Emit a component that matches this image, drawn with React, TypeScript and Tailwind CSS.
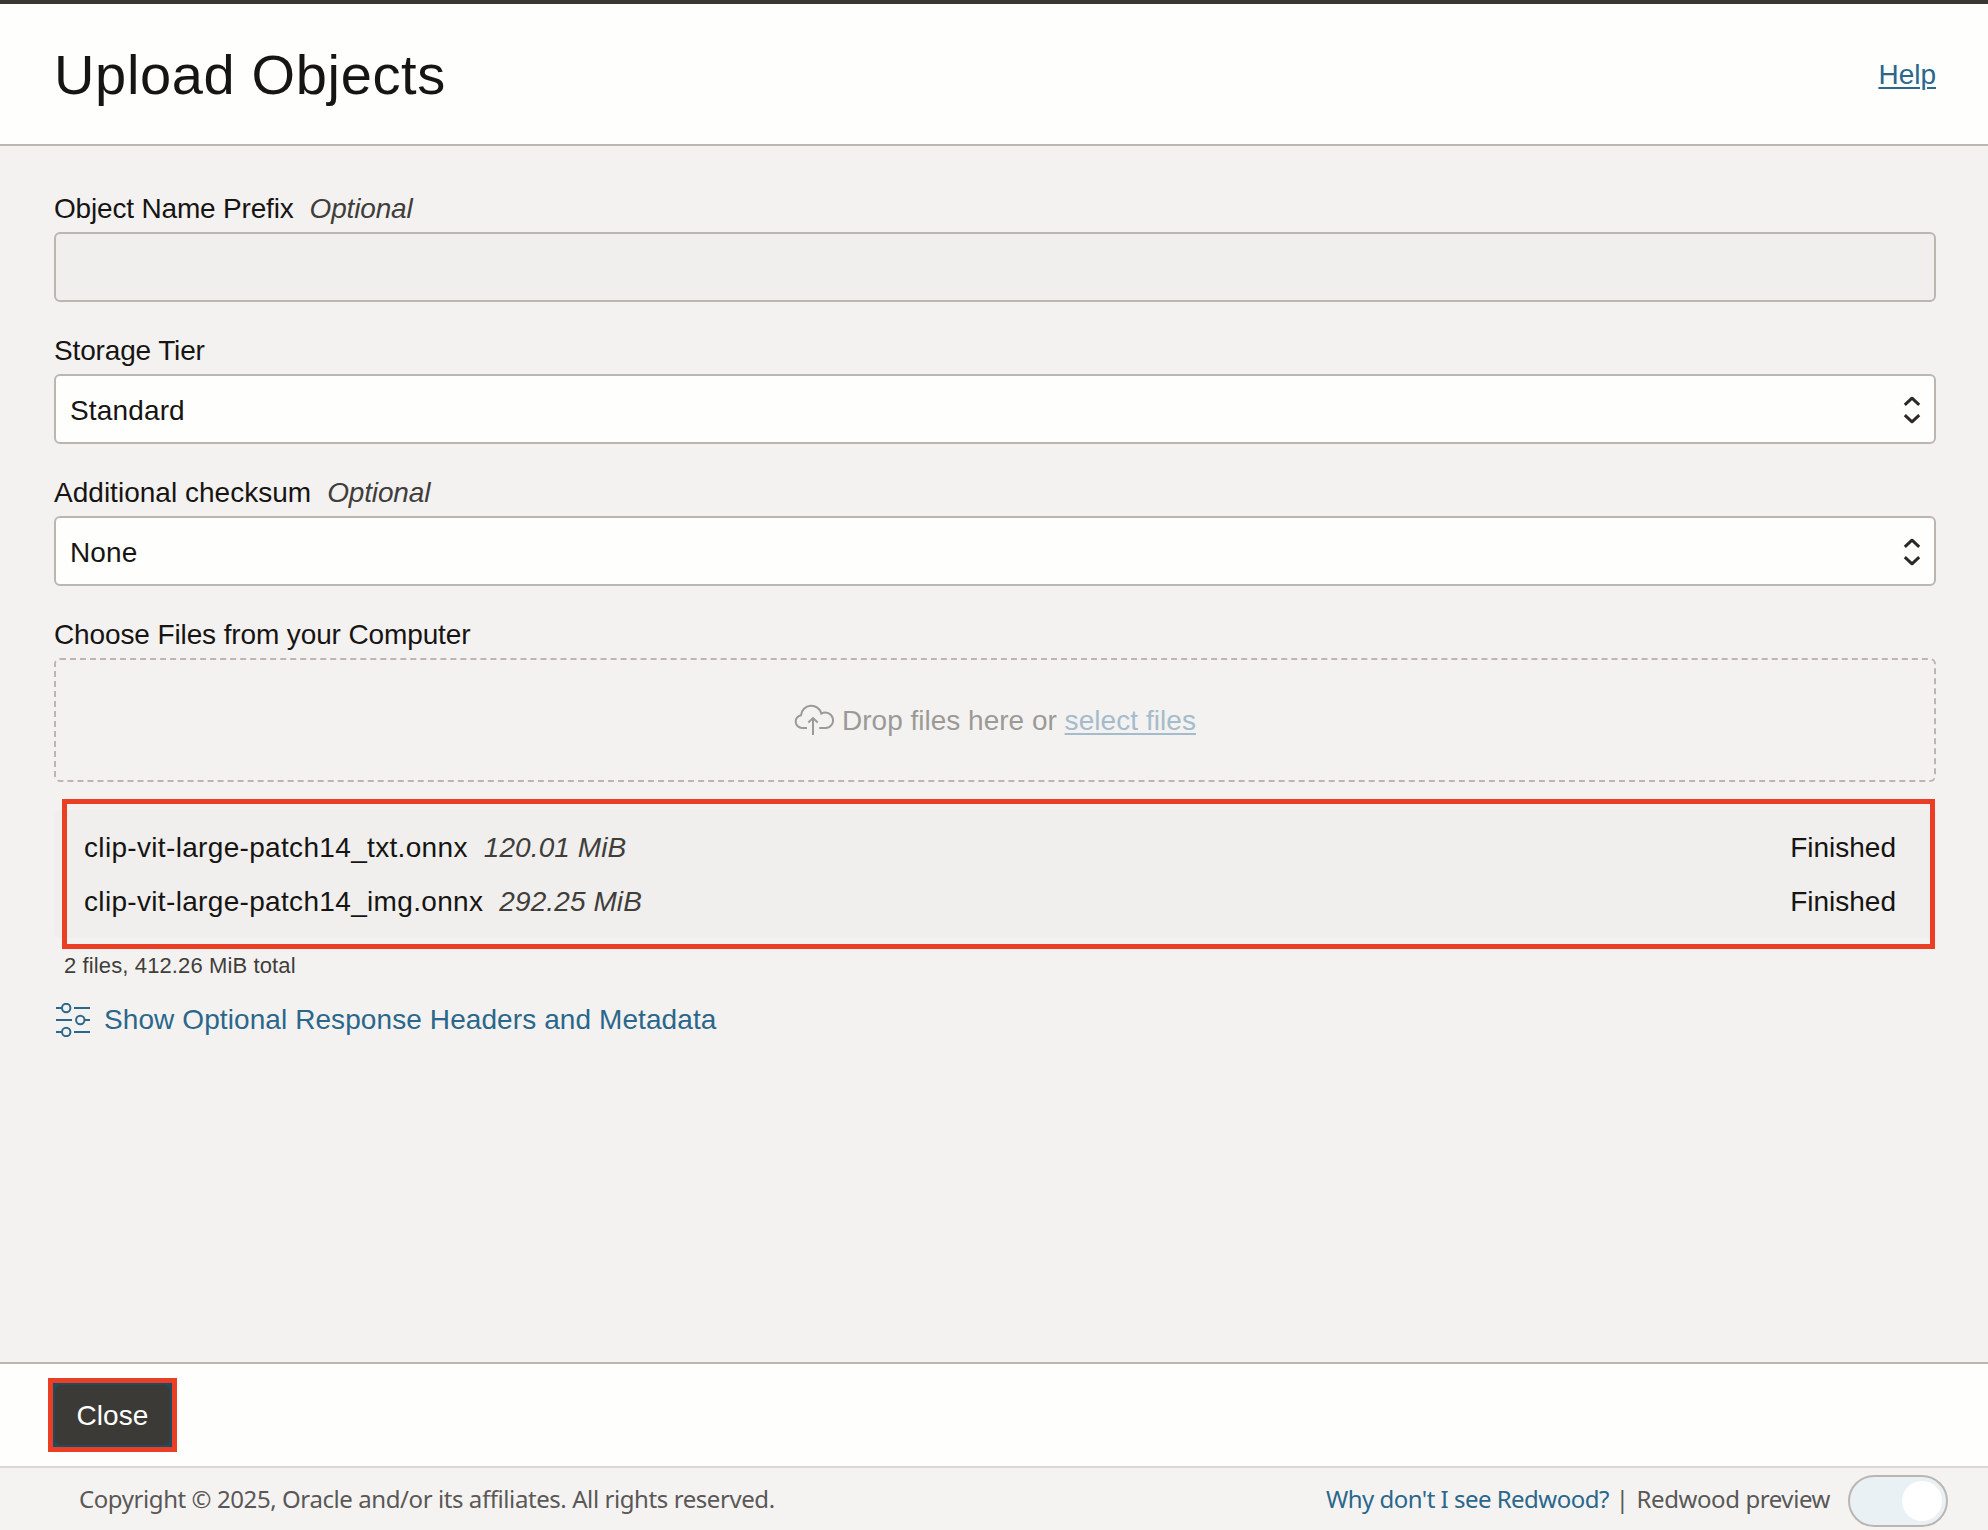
import type { ReactNode } from "react";

function Chevrons() {
  return (
    <svg className="h-8 w-5" viewBox="0 0 20 32" fill="none" stroke="#2b2927" strokeWidth="3" strokeLinejoin="round">
      <path d="M2.8 11.8L10 5.2L17.2 11.8" />
      <path d="M2.8 22.2L10 28.8L17.2 22.2" />
    </svg>
  );
}

function CloudUpload() {
  return (
    <svg className="h-8 w-10" viewBox="0 0 40 32" fill="none" stroke="#9b9a97" strokeWidth="2">
      <path d="M13 24H8.2A6.45 6.45 0 0 1 7 11.2A10.3 10.3 0 0 1 27.3 9.6A7.75 7.75 0 1 1 31 24H25.2" />
      <path d="M19 31V14.5M14.3 18.4L19 14L23.7 18.4" />
    </svg>
  );
}

function Sliders() {
  return (
    <svg className="h-[34px] w-[34px]" viewBox="0 0 34 34" fill="none" stroke="#2a678b" strokeWidth="2">
      <path d="M0 5H5.5M18 5H34M0 17H16M29 17H34M0 29H5.5M18 29H34" />
      <circle cx="10.2" cy="5" r="4.2" />
      <circle cx="24.3" cy="17" r="4.2" />
      <circle cx="10.2" cy="29" r="4.2" />
    </svg>
  );
}

function Field({ label, optional, children }: { label: ReactNode; optional?: boolean; children: ReactNode }) {
  return (
    <div className="flex flex-col gap-2">
      <div className="flex h-8 items-center pt-0.5 whitespace-nowrap">
        {label}
        {optional && <em className="ml-4 tracking-[-0.15px] text-[#403e3b]">Optional</em>}
      </div>
      {children}
    </div>
  );
}

function Select({ value }: { value: string }) {
  return (
    <div className="flex h-[70px] items-center justify-between rounded-md border-2 border-[#bcb6b1] bg-[#fefefc] pr-3 pl-[14px]">
      <span className="pt-1 tracking-[0.15px]">{value}</span>
      <Chevrons />
    </div>
  );
}

const files = [
  { name: "clip-vit-large-patch14_txt.onnx", size: "120.01 MiB" },
  { name: "clip-vit-large-patch14_img.onnx", size: "292.25 MiB" },
];

export default function App() {
  return (
    <div className="flex h-[1530px] w-[1988px] flex-col overflow-hidden bg-[#f4f2f1] font-['Liberation_Sans',Arial,sans-serif] text-[28px] leading-8 text-[#161513]">
      <header className="flex h-[146px] shrink-0 items-center justify-between border-t-4 border-b-2 border-t-[#3a3631] border-b-[#bcb6b1] bg-[#fefefc] pr-[52px] pl-[54px]">
        <h1 className="mt-0.5 text-[56px] leading-[64px] tracking-[0.65px]">Upload Objects</h1>
        <a className="pt-0.5 text-[#2a678b] underline decoration-2 underline-offset-[3px]">Help</a>
      </header>

      <main className="flex flex-1 flex-col px-[54px] pr-[52px] pt-[46px]">
        <div className="flex flex-col gap-8">
          <Field label={<span className="tracking-[-0.18px]">Object Name Prefix</span>} optional>
            <div className="h-[70px] rounded-md border-2 border-[#bcb6b1] bg-[#f0efed]" />
          </Field>
          <Field label={<span className="tracking-[-0.15px]">Storage Tier</span>}>
            <Select value="Standard" />
          </Field>
          <Field label={<span className="tracking-[0.02px]">Additional checksum</span>} optional>
            <Select value="None" />
          </Field>
          <Field label={<span className="tracking-[-0.12px]">Choose Files from your Computer</span>}>
            <div className="flex h-[124px] items-center justify-center rounded-md border-2 border-dashed border-[#bcb6b1] whitespace-pre text-[#9b9a97]">
              <CloudUpload />
              <span className="ml-[8px] pt-0.5">Drop files here or </span>
              <a className="pt-0.5 tracking-[0.05px] text-[#a4bccb] underline decoration-2 underline-offset-[3px] [text-decoration-skip-ink:none]">select files</a>
            </div>
          </Field>
        </div>

        <div className="relative mt-7 flex h-32 flex-col gap-[22px] rounded-md bg-[#f0efed] pt-[22px] pr-10 pl-[30px]">
          {files.map((f) => (
            <div key={f.name} className="flex items-center">
              <span className="tracking-[0.33px]">{f.name}</span>
              <em className="ml-4 tracking-[0.1px] text-[#403e3b]">{f.size}</em>
              <span className="ml-auto">Finished</span>
            </div>
          ))}
          <div className="absolute -top-[11px] right-px -bottom-[11px] left-2 border-[5px] border-[#ea3f25]" />
        </div>

        <p className="mt-4 pl-[10px] text-[22px] leading-6 tracking-[0.12px] text-[#403e3b]">2 files, 412.26 MiB total</p>
        <a className="mt-[26px] flex h-8 items-center pl-0.5 text-[#2a678b]">
          <Sliders />
          <span className="ml-[14px] tracking-[0.09px]">Show Optional Response Headers and Metadata</span>
        </a>
      </main>

      <section className="flex h-[104px] shrink-0 items-start border-t-2 border-[#bcb6b1] bg-[#fefefc] pt-[14px] pl-12">
        <div className="h-[74px] w-[129px] border-[5px] border-[#ea3f25]">
          <button className="h-full w-full border-2 border-[#204a60] bg-[#204a60]">
            <span className="flex h-full w-full items-center justify-center rounded-md bg-[#3c3a37] pt-px tracking-[0.1px] text-white">Close</span>
          </button>
        </div>
      </section>

      <footer className="flex h-16 shrink-0 items-center border-t-2 border-[#d9d8d6] bg-[#f4f3f2] pr-10 pl-[79px] font-['Noto_Sans',sans-serif] text-[24px] tracking-[-0.42px] whitespace-nowrap text-[#5a5856]">
        <span>Copyright © 2025, Oracle and/or its affiliates. All rights reserved.</span>
        <a className="ml-auto tracking-[-0.52px] text-[#2a678b]">Why don't I see Redwood?</a>
        <span className="mr-2 ml-[7px]">|</span>
        <span>Redwood preview</span>
        <div className="mt-1 ml-[18px] flex h-[52px] w-[100px] items-center justify-end rounded-full border-2 border-[#bcb6b1] bg-[#e9f1f5] pr-1">
          <div className="h-10 w-10 rounded-full bg-white" />
        </div>
      </footer>
    </div>
  );
}
